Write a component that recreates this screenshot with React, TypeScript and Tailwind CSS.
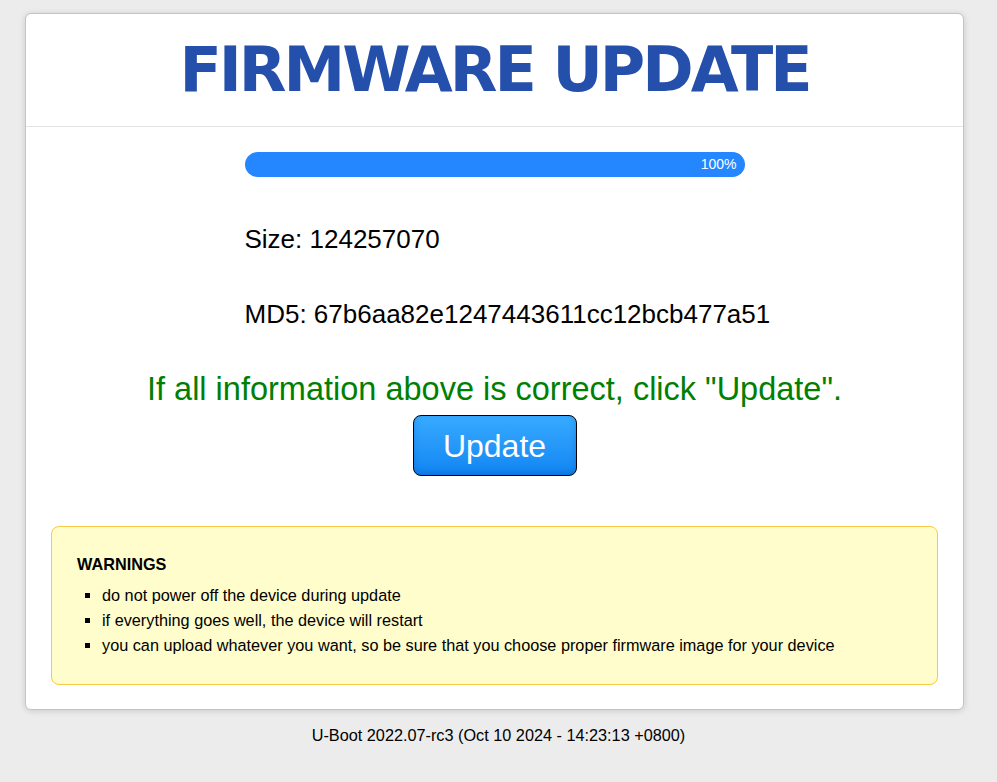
export default function App() {
  const warnings = [
    "do not power off the device during update",
    "if everything goes well, the device will restart",
    "you can upload whatever you want, so be sure that you choose proper firmware image for your device",
  ];

  return (
    <div className="min-h-[782px] bg-[#ececec] pt-[13px] font-['Liberation_Sans',Arial,sans-serif] text-black">
      <div className="mx-[25px] w-[939px] rounded-[6px] border border-[#c4c4c4] bg-white shadow-[0_1px_6px_rgba(0,0,0,0.15)]">
        <div className="flex h-[113px] items-center justify-center border-b border-[#e4e4e4]">
          <h1 className="font-['DejaVu_Sans',Verdana,sans-serif] text-[62px] font-bold leading-none tracking-[-3px] text-[#2450ac]">
            FIRMWARE UPDATE
          </h1>
        </div>

        <div className="flex flex-col items-center px-[25px] pt-[25px] pb-[24px]">
          <div className="flex h-[25px] w-[500px] items-center justify-end rounded-full bg-[#2487ff] pr-[8px] text-[14px] text-white">
            100%
          </div>

          <div className="w-[500px] whitespace-nowrap pt-[48px] text-[26px] leading-[28px]">
            <p>Size: 124257070</p>
            <p className="mt-[47px]">MD5: 67b6aa82e1247443611cc12bcb477a51</p>
          </div>

          <p className="mt-[43px] text-[32.5px] leading-[36px] text-[#008000]">
            If all information above is correct, click &quot;Update&quot;.
          </p>
          <button
            type="button"
            className="mt-[8px] h-[61px] w-[164px] rounded-[8px] border border-black bg-gradient-to-b from-[#37aaff] to-[#1086f3] text-[32px] text-white shadow-[inset_0_-3px_6px_rgba(0,60,160,0.25)]"
          >
            Update
          </button>

          <div className="mt-[50px] w-full rounded-[8px] border border-[#f8c847] bg-[#fffdcb] px-[25px] pt-[28px] pb-[26px]">
            <h3 className="text-[16.25px] font-bold leading-[18px]">WARNINGS</h3>
            <ul className="mt-[10px] list-[square] pl-[25px] text-[16.25px] leading-[25px]">
              {warnings.map((w) => (
                <li key={w}>{w}</li>
              ))}
            </ul>
          </div>
        </div>
      </div>

      <p className="mt-[15px] text-center text-[16.25px] leading-[20px]">
        U-Boot 2022.07-rc3 (Oct 10 2024 - 14:23:13 +0800)
      </p>
    </div>
  );
}
